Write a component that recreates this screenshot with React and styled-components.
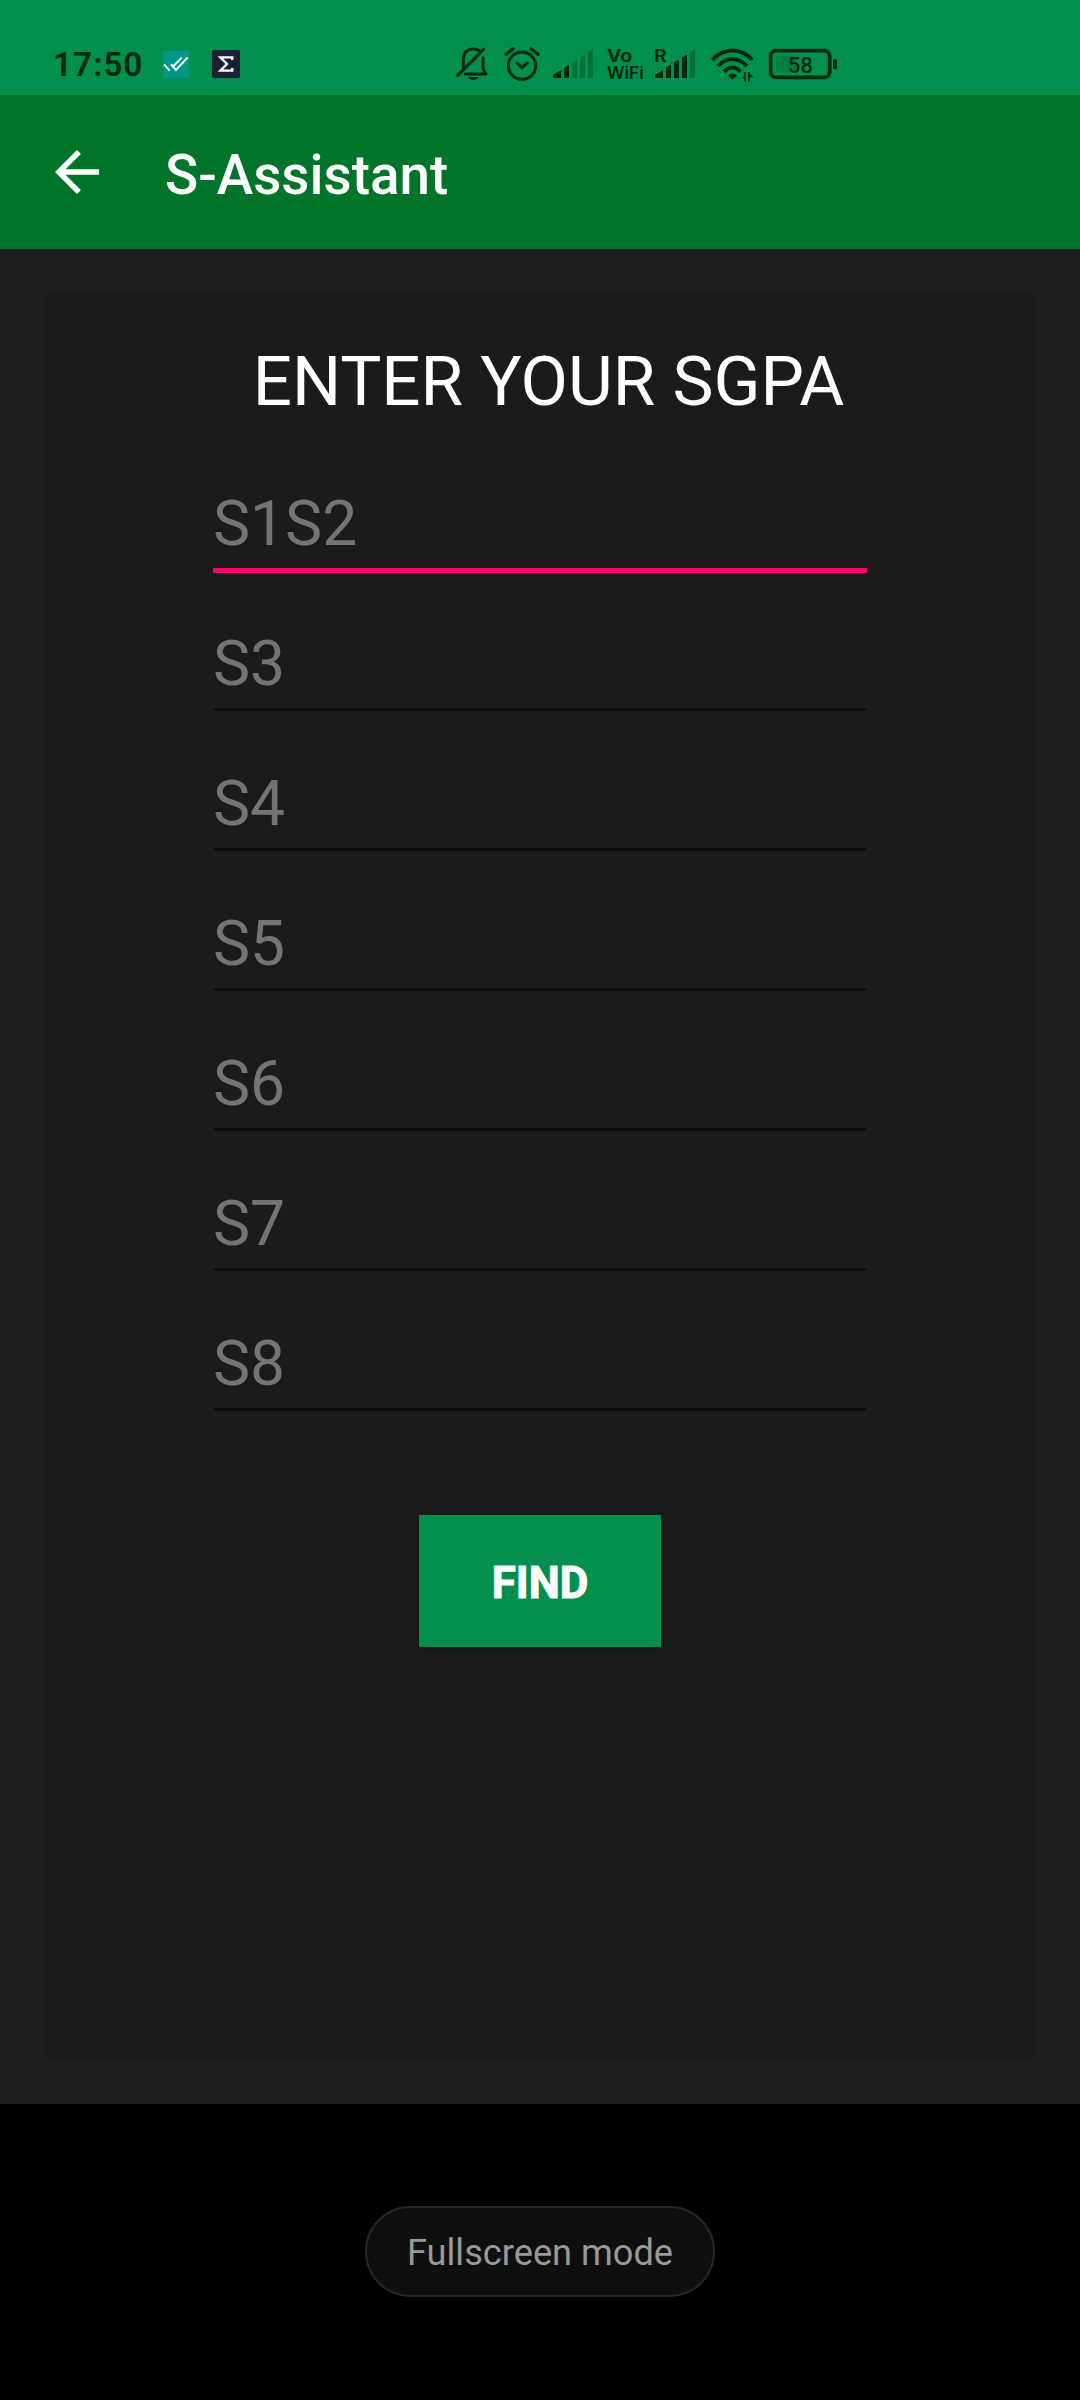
import React from "react";
import styled, { createGlobalStyle } from "styled-components";

const GlobalStyle = createGlobalStyle`
  * { box-sizing: border-box; }
  body { margin: 0; background: #000; font-family: Roboto, "Liberation Sans", sans-serif; }
`;

const Screen = styled.div`
  width: 1080px;
  height: 2400px;
  display: flex;
  flex-direction: column;
  background: #000;
`;

const StatusBar = styled.header`
  height: 95px;
  padding: 30px 0 0 53px;
  display: flex;
  background: #008f4c;
  color: #00290f;
`;

const Clock = styled.time`
  width: 110px;
  padding-top: 15px;
  font-size: 33.4px;
  line-height: 40px;
  font-weight: 600;
  letter-spacing: 1px;
`;

const StatusIcon = styled.svg`
  flex: none;
  height: 65px;
  width: ${(p) => p.$width}px;
  margin-right: ${(p) => p.$after || 0}px;
  fill: none;
  stroke: none;
`;

const AppBar = styled.nav`
  height: 154px;
  padding-left: 44px;
  display: flex;
  align-items: center;
  background: #007429;
`;

const BackIcon = styled.svg`
  width: 66px;
  height: 66px;
  fill: #fff;
`;

const Title = styled.h1`
  margin: 6px 0 0 55px;
  font-size: 54.8px;
  line-height: 64px;
  font-weight: 500;
  color: #fff;
`;

const Content = styled.main`
  height: 1855px;
  padding: 44px;
  background: #1e1e1e;
`;

const Card = styled.section`
  height: 1767px;
  display: flex;
  flex-direction: column;
  align-items: center;
  background: #1b1b1b;
`;

const Heading = styled.h2`
  margin: 49px 0 0 17px;
  font-size: 69px;
  line-height: 80px;
  font-weight: 400;
  color: #fff;
  white-space: nowrap;
`;

const Fields = styled.form`
  width: 654px;
  margin-top: 11px;
  display: flex;
  flex-direction: column;
`;

const Field = styled.label`
  height: 140px;
  padding-top: 54px;
  display: flex;
  flex-direction: column;
  font-size: 62.4px;
  line-height: 74px;
  color: #747474;

  &::after {
    content: "";
    flex: none;
    height: ${(p) => (p.$focused ? 5 : 3)}px;
    margin-top: 7px;
    background: ${(p) => (p.$focused ? "#f8056e" : "#0d0d0d")};
  }
`;

const FindButton = styled.button`
  width: 242px;
  height: 132px;
  margin-top: 102px;
  padding: 4px 0 0;
  border: 0;
  background: #008f4c;
  box-shadow: 0 4px 6px rgba(0, 0, 0, 0.14);
  color: #fff;
  font-family: inherit;
  font-size: 44px;
  line-height: 52px;
  font-weight: 700;
  -webkit-text-stroke: 1px #fff;
`;

const SystemArea = styled.footer`
  flex: 1;
  padding-top: 102px;
  display: flex;
  justify-content: center;
  align-items: flex-start;
`;

const ModePill = styled.div`
  width: 350px;
  height: 91px;
  padding: 2px 0 0 0;
  display: flex;
  align-items: center;
  justify-content: center;
  border: 2px solid #272727;
  border-radius: 46px;
  background: #0f0f0f;
  color: #999;
  font-size: 36.2px;
  line-height: 42px;
  white-space: nowrap;
`;

const INK = "#00290f";
const DIM = "#00713a";

const SEMESTERS = ["S1S2", "S3", "S4", "S5", "S6", "S7", "S8"];

function TaskAppIcon() {
  return (
    <StatusIcon $width={26} $after={23} viewBox="399 0 78 195">
      <rect x="399" y="63" width="78" height="80" rx="3" fill="#009688" />
      <path d="M402 103l17 19M423 103l15 17 35-38M455 83l-24 25" stroke="#fff" strokeWidth="6" />
    </StatusIcon>
  );
}

function SigmaAppIcon() {
  return (
    <StatusIcon $width={28} $after={216} viewBox="546 0 84 195">
      <rect x="546" y="60" width="84" height="84" rx="6" fill="#1d1f35" />
      <path d="M546 83l25-23M594 60l36 36M546 118l28 26M602 108l28 22" stroke="#34364a" strokeWidth="1.5" />
      <path d="M607 90v-8h-36l20 20-20 20h36v-8" stroke="#fff" strokeWidth="7" />
    </StatusIcon>
  );
}

function MutedBellIcon() {
  return (
    <StatusIcon $width={32} $after={15} viewBox="48 0 96 195">
      <path d="M70 112V87c0-20 12-30 30-30 9 0 16 3 21 8M129 83v29c0 7 3 13 9 20H76" stroke={INK} strokeWidth="9" strokeLinecap="round" strokeLinejoin="round" />
      <path d="M53 136L131 58" stroke={INK} strokeWidth="9" strokeLinecap="round" />
      <path d="M84 141h32c-4 6-9 9-16 9s-12-3-16-9z" fill={INK} />
    </StatusIcon>
  );
}

function AlarmIcon() {
  return (
    <StatusIcon $width={37} $after={12} viewBox="189 0 111 195">
      <circle cx="246" cy="107" r="41" stroke={INK} strokeWidth="9" />
      <path d="M231 99l15 14 16-14" stroke={INK} strokeWidth="9" strokeLinecap="round" strokeLinejoin="round" />
      <path d="M198 73l21-16M273 57l21 16" stroke={INK} strokeWidth="10" strokeLinecap="round" />
    </StatusIcon>
  );
}

function WeakSignalIcon() {
  return (
    <StatusIcon $width={42} $after={13} viewBox="336 0 126 195">
      <path d="M339 134l24-13v23h-21q-3 0-3-3zM372 113l15-9v40h-15z" fill={INK} />
      <path d="M396 98l15-8v54h-15zM420 83l15-9v70h-15zM444 66l15-9v83q0 4-4 4h-11z" fill={DIM} />
    </StatusIcon>
  );
}

function VoWifiIcon() {
  return (
    <StatusIcon $width={37} $after={10} viewBox="501 0 111 195">
      <text x="501" y="95" fill={INK} fontFamily="Inter, sans-serif" fontSize="50" fontWeight="700" textLength="76" lengthAdjust="spacingAndGlyphs">Vo</text>
      <text x="501" y="147" fill={INK} fontFamily="Inter, sans-serif" fontSize="51" fontWeight="600" textLength="110" lengthAdjust="spacingAndGlyphs">WiFi</text>
    </StatusIcon>
  );
}

function RoamingSignalIcon() {
  return (
    <StatusIcon $width={42} $after={14} viewBox="42 0 126 195">
      <text x="42" y="96" fill={INK} fontFamily="Roboto, sans-serif" fontSize="56" fontWeight="600" textLength="38" lengthAdjust="spacingAndGlyphs">R</text>
      <path d="M45 134l24-13v23H48q-3 0-3-3zM78 112l15-8v40H78zM102 97l15-8v55h-15zM126 82l15-8v70h-15z" fill={INK} />
      <path d="M150 66l15-9v83q0 4-4 4h-11z" fill={DIM} />
    </StatusIcon>
  );
}

function WifiIcon() {
  return (
    <StatusIcon $width={44} $after={14} viewBox="210 0 132 195">
      <path d="M217 90c34-38 86-38 120 0M234 108c26-28 60-28 86 0M252 125c16-17 34-17 50 0" stroke={INK} strokeWidth="11.5" />
      <path d="M264 136q13-11 27 0l-14 13z" fill={INK} />
      <path d="M315 126v29M327 155v-29" stroke={INK} strokeWidth="5" />
      <path d="M307 140h10v15zM325 126l15 16h-13z" fill={INK} />
    </StatusIcon>
  );
}

function BatteryIcon() {
  return (
    <StatusIcon $width={70} viewBox="384 0 210 195">
      <rect x="407" y="77" width="62" height="50" rx="8" fill="#008040" />
      <rect x="392" y="62" width="177" height="80" rx="16" stroke={INK} strokeWidth="11" />
      <rect x="579" y="87" width="12" height="31" rx="5" fill={INK} />
      <text x="481" y="128" textAnchor="middle" fill={INK} fontFamily="Roboto, sans-serif" fontSize="67" fontWeight="500">58</text>
    </StatusIcon>
  );
}

export default function App() {
  return (
    <>
      <GlobalStyle />
      <Screen>
        <StatusBar>
          <Clock>17:50</Clock>
          <TaskAppIcon />
          <SigmaAppIcon />
          <MutedBellIcon />
          <AlarmIcon />
          <WeakSignalIcon />
          <VoWifiIcon />
          <RoamingSignalIcon />
          <WifiIcon />
          <BatteryIcon />
        </StatusBar>
        <AppBar>
          <BackIcon viewBox="0 0 24 24">
            <path d="M20 11H7.83l5.59-5.59L12 4l-8 8 8 8 1.41-1.41L7.83 13H20v-2z" />
          </BackIcon>
          <Title>S-Assistant</Title>
        </AppBar>
        <Content>
          <Card>
            <Heading>ENTER YOUR SGPA</Heading>
            <Fields>
              {SEMESTERS.map((name, i) => (
                <Field key={name} $focused={i === 0}>{name}</Field>
              ))}
            </Fields>
            <FindButton type="button">FIND</FindButton>
          </Card>
        </Content>
        <SystemArea>
          <ModePill>Fullscreen mode</ModePill>
        </SystemArea>
      </Screen>
    </>
  );
}
